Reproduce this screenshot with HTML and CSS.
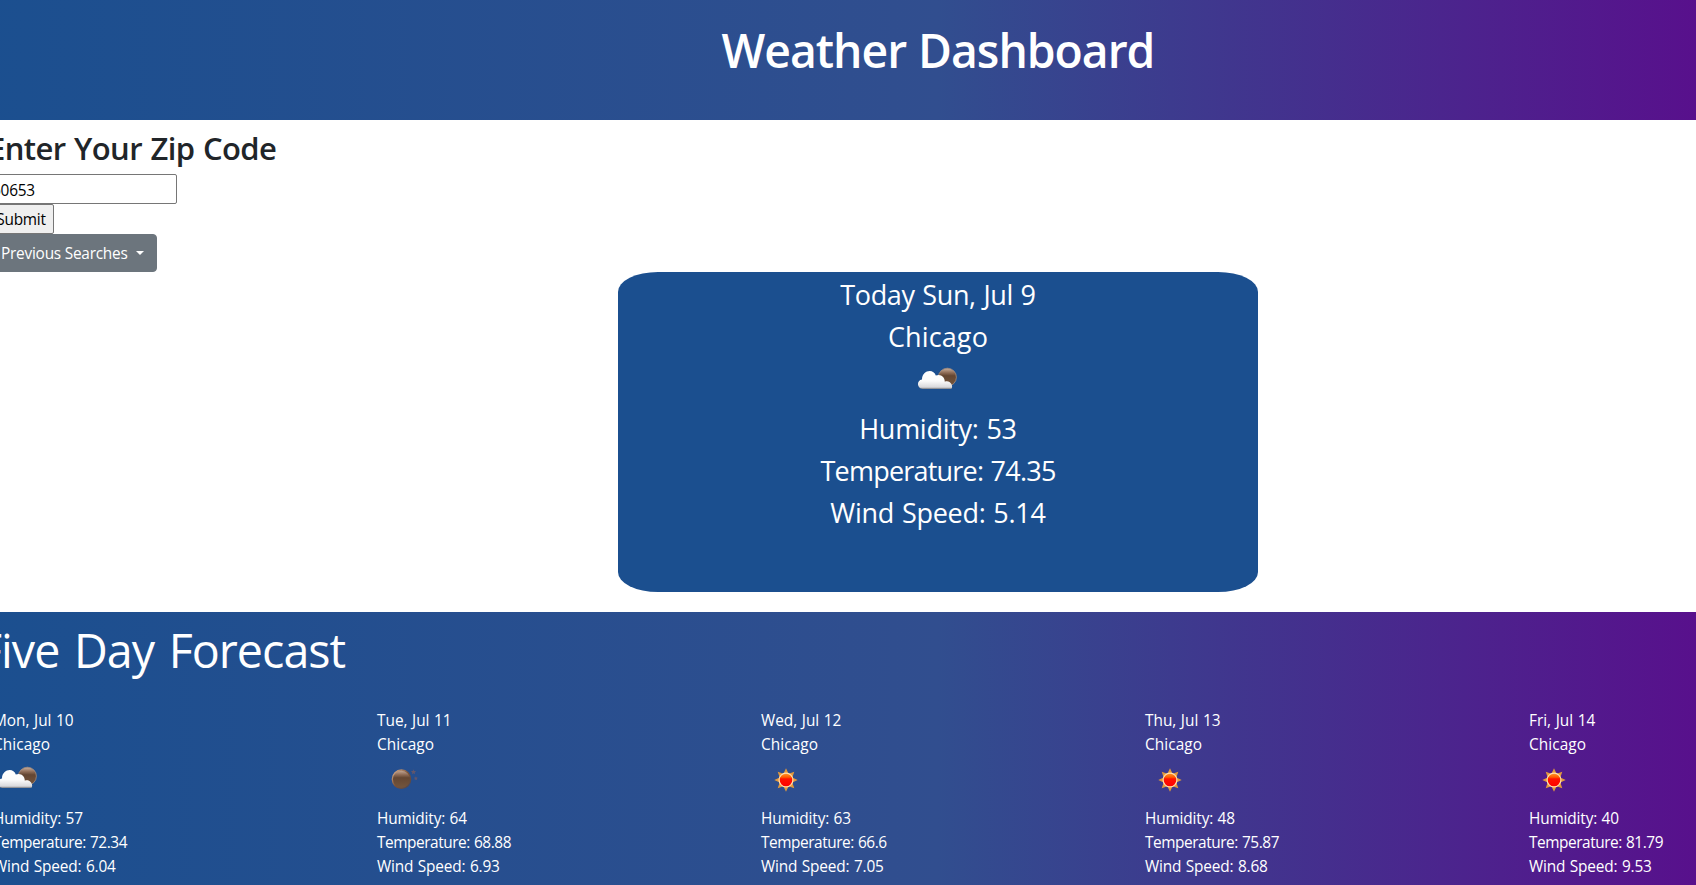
FILE: index.html
```html
<!DOCTYPE html>
<html lang="en">
<head>
<meta charset="utf-8">
<title>Weather Dashboard</title>
<link rel="stylesheet" href="styles.css">
</head>
<body>
<svg class="defs" width="0" height="0" aria-hidden="true">
  <defs>
    <linearGradient id="cloudFill" x1="0" y1="0" x2="0" y2="1"><stop offset="0" stop-color="#fff"/><stop offset=".55" stop-color="#fbfbfb"/><stop offset=".9" stop-color="#d9d9dc"/><stop offset="1" stop-color="#77797f"/></linearGradient>
    <linearGradient id="moonFill" x1="0" y1="0" x2="0" y2="1"><stop offset="0" stop-color="#c9b09f"/><stop offset=".25" stop-color="#8f6c56"/><stop offset=".42" stop-color="#644632"/><stop offset="1" stop-color="#75563d"/></linearGradient>
    <linearGradient id="moonRim" x1="0" y1="0" x2="1" y2="1"><stop offset="0" stop-color="#e2b796"/><stop offset=".5" stop-color="#7b5135"/><stop offset="1" stop-color="#4a4550"/></linearGradient>
    <linearGradient id="sunFill" x1="0" y1="0" x2="0" y2="1"><stop offset="0" stop-color="#ff9a2a"/><stop offset=".3" stop-color="#ff5a00"/><stop offset=".42" stop-color="#ff1200"/><stop offset="1" stop-color="#f00"/></linearGradient>
    <symbol id="clouds" viewBox="0 0 50 50">
      <circle cx="34.4" cy="20.2" r="9" fill="url(#moonFill)" stroke="#a58c7b" stroke-width=".8"/>
      <path d="M9.6 32 C3.5 31.5 3.6 23.2 9 22.6 C8.8 13.2 20.5 10.8 22.8 18.6 C27.5 16.4 32 20 31.8 24.8 C36.5 22.6 41 28.5 38.4 32 Z" fill="url(#cloudFill)"/>
    </symbol>
    <symbol id="moon" viewBox="0 0 50 50">
      <circle cx="24.5" cy="23.2" r="9.2" fill="url(#moonFill)" stroke="url(#moonRim)" stroke-width="1.3"/>
      <path d="M36.5 13.2l.7 1.7 1.9.2-1.4 1.3.4 1.9-1.6-1-1.6 1 .4-1.9-1.4-1.3 1.9-.2zM38.9 20.2l.5 1.4 1.5.2-1.1 1 .3 1.5-1.2-.8-1.3.8.3-1.5-1.1-1 1.5-.2z" fill="#62566b"/>
    </symbol>
    <symbol id="sun" viewBox="0 0 50 50">
      <path d="M25 12.3l2.6 5.4 5.7-2-2 5.7 5.4 2.6-5.4 2.6 2 5.7-5.7-2L25 35.7 22.4 30.3l-5.7 2 2-5.7-5.4-2.6 5.4-2.6-2-5.7 5.7 2z" fill="#e39a3c"/>
      <circle cx="25" cy="24" r="6.9" fill="url(#sunFill)" stroke="#ffdfae" stroke-width="1.2"/>
    </symbol>
  </defs>
</svg>
<div class="page">
  <header class="hero"><h1 class="hero-title">Weather Dashboard</h1></header>
  <section class="search">
    <h2 class="search-title">Enter Your Zip Code</h2>
    <input class="zip" type="text" value="60653">
    <button class="submit">Submit</button>
    <button class="previous">Previous Searches<span class="caret"></span></button>
  </section>
  <section class="today">
    <div class="date">Today Sun, Jul 9</div>
    <div class="place">Chicago</div>
    <svg class="icon"><use href="#clouds"/></svg>
    <div>Humidity: 53</div>
    <div class="temp">Temperature: 74.35</div>
    <div>Wind Speed: 5.14</div>
  </section>
  <section class="forecast">
    <div class="forecast-title">Five Day Forecast</div>
    <div class="days">
      <div class="day"><div class="date">Mon, Jul 10</div><div class="place">Chicago</div><svg class="icon"><use href="#clouds"/></svg><div>Humidity: 57</div><div class="temp">Temperature: 72.34</div><div>Wind Speed: 6.04</div></div>
      <div class="day"><div class="date">Tue, Jul 11</div><div class="place">Chicago</div><svg class="icon"><use href="#moon"/></svg><div>Humidity: 64</div><div class="temp">Temperature: 68.88</div><div>Wind Speed: 6.93</div></div>
      <div class="day"><div class="date">Wed, Jul 12</div><div class="place">Chicago</div><svg class="icon"><use href="#sun"/></svg><div>Humidity: 63</div><div class="temp">Temperature: 66.6</div><div>Wind Speed: 7.05</div></div>
      <div class="day"><div class="date">Thu, Jul 13</div><div class="place">Chicago</div><svg class="icon"><use href="#sun"/></svg><div>Humidity: 48</div><div class="temp">Temperature: 75.87</div><div>Wind Speed: 8.68</div></div>
      <div class="day"><div class="date">Fri, Jul 14</div><div class="place">Chicago</div><svg class="icon"><use href="#sun"/></svg><div>Humidity: 40</div><div class="temp">Temperature: 81.79</div><div>Wind Speed: 9.53</div></div>
    </div>
  </section>
</div>
</body>
</html>
```
FILE: styles.css
```css
* { box-sizing: border-box; }
body {
  margin: 0;
  height: 885px;
  overflow: hidden;
  background: #fff;
  color: #212529;
  font: 15.4px/24px "Segoe UI", "Open Sans", "Noto Sans", sans-serif;
  letter-spacing: -0.015em;
}
.defs { position: absolute; }
.page { width: 1920px; margin-left: -22px; }
.hero, .forecast {
  background: linear-gradient(90deg, #1b4f8f 0%, #314e8f 50%, #5a0d8c 91.5%, #5a0d8c 100%);
  color: #fff;
}
.hero { height: 120px; padding-top: 22px; text-align: center; }
.hero-title { margin: 0; font-size: 46.3px; line-height: 58px; font-weight: 600; letter-spacing: -0.022em; word-spacing: 1px; }
.search { height: 152px; padding: 9px 10px 0; display: flex; flex-direction: column; align-items: flex-start; }
.search-title { margin: 0 0 7px; font-size: 31px; line-height: 38px; font-weight: 600; letter-spacing: -0.019em; word-spacing: 1px; }
.zip, .submit { height: 30px; font: inherit; letter-spacing: inherit; color: #000; }
.zip { width: 189px; padding: 2px 3px 0; border: 1px solid #767676; border-radius: 2px; background: #fff; }
.submit { width: 66px; padding: 2px 6px 0; border: 1px solid #767676; border-radius: 2px; background: #efefef; }
.previous {
  display: flex;
  align-items: center;
  gap: 8px;
  height: 38px;
  width: 169px;
  padding: 2px 12px 0;
  border: 1px solid #6c757d;
  border-radius: 4px;
  background: #6c757d;
  color: #fff;
  font: inherit;
  letter-spacing: inherit;
  white-space: nowrap;
}
.caret { margin-bottom: 2px; border-top: 4px solid #fff; border-left: 4px solid transparent; border-right: 4px solid transparent; }
.today {
  width: 640px;
  height: 320px;
  margin: 0 auto 20px;
  padding-top: 2px;
  border-radius: 40px / 20px;
  background: #1b4f8f;
  color: #fff;
  text-align: center;
  font-size: 27px;
  line-height: 42px;
}
.today, .day { letter-spacing: -0.01em; word-spacing: 0.04em; }
.place { letter-spacing: 0.004em; }
.day .date { letter-spacing: -0.001em; }
.today .date { letter-spacing: -0.014em; }
.temp { letter-spacing: -0.029em; }
.icon { display: block; width: 50px; height: 50px; overflow: visible; }
.today .icon { margin: -1px auto 1px; }
.forecast { height: 300px; padding-top: 2px; }
.forecast-title { font-size: 46.6px; line-height: 72px; margin-bottom: 23px; letter-spacing: -0.021em; word-spacing: 3.5px; }
.days { display: grid; grid-template-columns: repeat(5, 384px); }
.day { padding: 0 15px; }
.day .icon { margin: -1px 0 1px; }
```
